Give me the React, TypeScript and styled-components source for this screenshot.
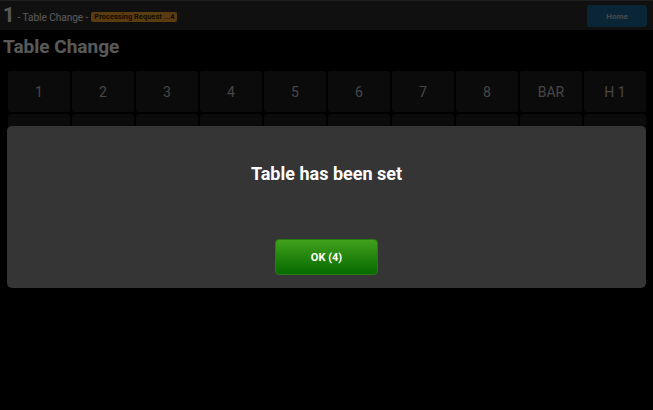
import React from "react";
import styled, { createGlobalStyle } from "styled-components";

const GlobalStyle = createGlobalStyle`
  html, body {
    margin: 0;
    padding: 0;
    background: #000;
    font-family: Roboto, "Liberation Sans", Arial, sans-serif;
  }
  * { box-sizing: border-box; }
`;

const tables = ["1", "2", "3", "4", "5", "6", "7", "8", "BAR", "H 1"];
const moreTables = ["H 2", "H 3", "H 4", "H 5", "H 6", "H 7", "H 8", "H 9", "T 1", "T 2"];

const App: React.FC = () => {
  return (
    <>
      <GlobalStyle />
      <Page>
        <TopBar>
          <Crumbs>
            <BigNumber>1</BigNumber>
            <CrumbText>- Table Change -</CrumbText>
            <Badge>Processing Request ...4</Badge>
          </Crumbs>
          <HomeButton>Home</HomeButton>
        </TopBar>
        <Heading>Table Change</Heading>
        <Grid>
          {[...tables, ...moreTables].map((name) => (
            <TableCell key={name}>{name}</TableCell>
          ))}
        </Grid>
      </Page>
      <Overlay />
      <Modal>
        <ModalTitle>Table has been set</ModalTitle>
        <OkButton>OK (4)</OkButton>
      </Modal>
    </>
  );
};

export default App;

const Page = styled.div`
  width: 653px;
  height: 410px;
  background: #000;
  overflow: hidden;
`;

const TopBar = styled.div`
  height: 30px;
  background: #2e2e2e;
  border-top: 1px solid #5a5a5a;
  display: flex;
  align-items: center;
  justify-content: space-between;
  padding: 0 6px 0 3px;
`;

const Crumbs = styled.div`
  display: flex;
  align-items: center;
  gap: 3px;
  color: #fff;
`;

const BigNumber = styled.span`
  font-size: 20px;
  font-weight: 700;
  line-height: 21px;
`;

const CrumbText = styled.span`
  font-size: 10px;
  margin-top: 3px;
`;

const Badge = styled.span`
  background: #ffab2e;
  color: #3a2400;
  font-size: 7.5px;
  font-weight: 700;
  line-height: 10px;
  padding: 0 3px;
  border-radius: 2px;
  margin-top: 3px;
`;

const HomeButton = styled.button`
  width: 60px;
  height: 22px;
  margin-top: 1px;
  border: none;
  border-radius: 3px;
  background: #1e6c9a;
  color: #c4d4e0;
  font-family: inherit;
  font-size: 8px;
  font-weight: 700;
`;

const Heading = styled.h1`
  margin: 0;
  padding: 5px 3px 0;
  height: 41px;
  color: #fff;
  font-size: 19px;
  font-weight: 700;
  line-height: 24px;
`;

const Grid = styled.div`
  display: grid;
  grid-template-columns: repeat(10, 62px);
  grid-auto-rows: 41px;
  gap: 2px;
  padding-left: 8px;
`;

const TableCell = styled.div`
  background: #202020;
  border-radius: 3px;
  color: #c8c8c8;
  font-size: 14px;
  display: flex;
  align-items: center;
  justify-content: center;
`;

const Overlay = styled.div`
  position: fixed;
  inset: 0;
  background: rgba(0, 0, 0, 0.65);
`;

const Modal = styled.div`
  position: fixed;
  left: 7px;
  top: 126px;
  width: 639px;
  height: 162px;
  background: #353535;
  border-radius: 5px;
  display: flex;
  flex-direction: column;
  align-items: center;
  padding-top: 37px;
`;

const ModalTitle = styled.h2`
  margin: 0;
  color: #fff;
  font-size: 18px;
  font-weight: 700;
  line-height: 22px;
`;

const OkButton = styled.button`
  margin-top: 54px;
  width: 103px;
  height: 36px;
  border: 1px solid #2a7a14;
  border-radius: 4px;
  background: linear-gradient(#41a01c, #066a00);
  color: #fff;
  font-family: inherit;
  font-size: 11px;
  font-weight: 700;
`;
